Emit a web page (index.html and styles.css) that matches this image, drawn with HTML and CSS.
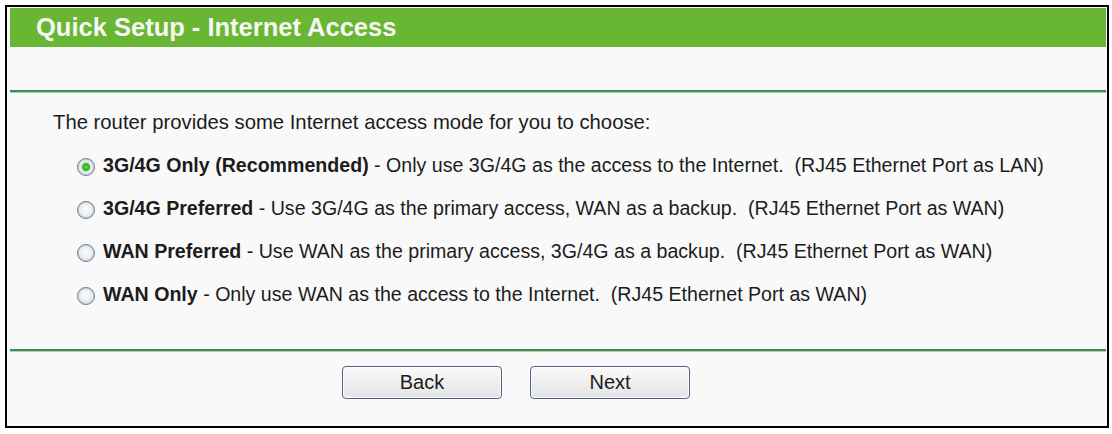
FILE: index.html
```html
<!DOCTYPE html>
<html>
<head>
<meta charset="utf-8">
<title>Quick Setup - Internet Access</title>
<link rel="stylesheet" href="styles.css">
</head>
<body>
<div class="frame">
  <div class="header">Quick Setup - Internet Access</div>
  <div class="blank"></div>
  <div class="rule"></div>
  <div class="content">
    <div class="intro">The router provides some Internet access mode for you to choose:</div>
    <div class="row"><span class="radio checked"></span><span class="label"><b>3G/4G Only (Recommended)</b> - Only use 3G/4G as the access to the Internet.&nbsp; (RJ45 Ethernet Port as LAN)</span></div>
    <div class="row"><span class="radio"></span><span class="label"><b>3G/4G Preferred</b> - Use 3G/4G as the primary access, WAN as a backup.&nbsp; (RJ45 Ethernet Port as WAN)</span></div>
    <div class="row"><span class="radio"></span><span class="label"><b>WAN Preferred</b> - Use WAN as the primary access, 3G/4G as a backup.&nbsp; (RJ45 Ethernet Port as WAN)</span></div>
    <div class="row"><span class="radio"></span><span class="label"><b>WAN Only</b> - Only use WAN as the access to the Internet.&nbsp; (RJ45 Ethernet Port as WAN)</span></div>
  </div>
  <div class="rule"></div>
  <div class="buttons">
    <button class="btn" type="button">Back</button>
    <button class="btn" type="button">Next</button>
  </div>
</div>
</body>
</html>
```
FILE: styles.css
```css
html, body {
  margin: 0;
  padding: 0;
  background: #ffffff;
}
body {
  font-family: "Liberation Sans", Arial, sans-serif;
  color: #1c1c1c;
}
.frame {
  box-sizing: border-box;
  margin: 5px;
  width: 1104px;
  height: 423px;
  border: 2px solid #000;
  background: #f9f9f9;
  padding: 1px 1px 0 3px;
  display: flex;
  flex-direction: column;
}
.header {
  height: 39px;
  background: #68b633;
  color: #f7f7f2;
  font-weight: bold;
  font-size: 25.5px;
  line-height: 39px;
  padding-left: 26px;
}
.blank {
  height: 43px;
}
.rule {
  height: 2px;
  background: #3f8c5b;
  border-bottom: 1px solid #aacdb6;
}
.content {
  padding: 8px 0 0 43px;
  height: 256px;
  box-sizing: border-box;
  font-size: 19.6px;
}
.intro {
  height: 43px;
  line-height: 43px;
  font-size: 20.3px;
}
.row {
  height: 43px;
  display: flex;
  align-items: center;
  padding-left: 24px;
}
.label {
  line-height: 43px;
  white-space: nowrap;
}
.label b {
  font-weight: bold;
}
.radio {
  box-sizing: border-box;
  width: 18px;
  height: 18px;
  border-radius: 50%;
  border: 1px solid #6a7f96;
  background: radial-gradient(circle at 50% 45%, #fdfdfd 0, #f0f0f0 40%, #d5d9de 100%);
  box-shadow: inset 0 0 0 1px #c9d1da;
  margin-right: 8px;
  flex: none;
  position: relative;
  top: 1px;
}
.radio.checked {
  background: radial-gradient(circle at 50% 50%, #6ad85a 0, #2fae2a 3px, #7cc772 4px, #f0f0f0 5px, #eeeeee 45%, #d5d9de 100%);
}
.buttons {
  padding: 14px 0 0 332px;
  display: flex;
  gap: 28px;
}
.btn {
  width: 160px;
  height: 33px;
  border: 1px solid #4b6486;
  border-radius: 4px;
  background: linear-gradient(#fafafa, #eeeeee 55%, #e4e4e4);
  box-shadow: inset 0 0 0 1px #ffffff;
  font-family: "Liberation Sans", Arial, sans-serif;
  font-size: 20px;
  color: #1c1c1c;
  padding: 0;
  margin: 0;
}
```
